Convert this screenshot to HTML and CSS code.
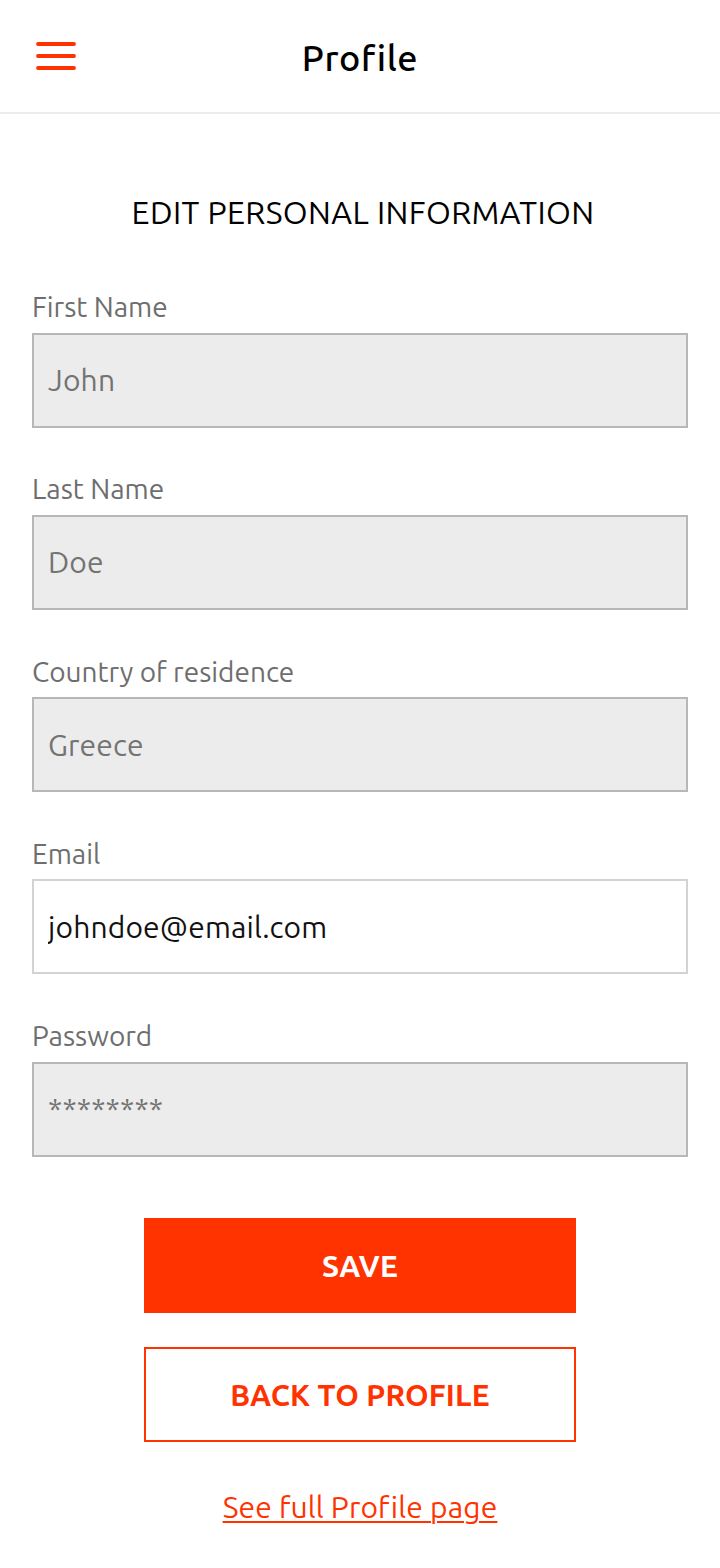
FILE: index.html
```html
<!DOCTYPE html>
<html lang="en">
<head>
<meta charset="utf-8">
<title>Profile</title>
<link rel="stylesheet" href="styles.css">
</head>
<body>
<header class="topbar">
  <div class="topbar-left">
    <button class="menu-btn" aria-label="Menu">
      <svg width="40" height="28" viewBox="0 0 40 28" aria-hidden="true">
        <line x1="2" y1="2" x2="38" y2="2" />
        <line x1="2" y1="14" x2="38" y2="14" />
        <line x1="2" y1="26" x2="38" y2="26" />
      </svg>
    </button>
  </div>
  <h1 class="topbar-title">Profile</h1>
  <div class="topbar-right"></div>
</header>

<main class="content">
  <h2 class="section-title">EDIT PERSONAL INFORMATION</h2>

  <form class="form">
    <div class="field">
      <label class="field-label" for="fn">First Name</label>
      <input class="field-input" id="fn" type="text" value="John" disabled>
    </div>
    <div class="field">
      <label class="field-label" for="ln">Last Name</label>
      <input class="field-input" id="ln" type="text" value="Doe" disabled>
    </div>
    <div class="field">
      <label class="field-label" for="cr">Country of residence</label>
      <input class="field-input" id="cr" type="text" value="Greece" disabled>
    </div>
    <div class="field">
      <label class="field-label" for="em">Email</label>
      <input class="field-input field-input-active" id="em" type="email" value="johndoe@email.com">
    </div>
    <div class="field">
      <label class="field-label" for="pw">Password</label>
      <input class="field-input" id="pw" type="text" value="********" disabled>
    </div>

    <div class="actions">
      <button type="button" class="btn btn-primary">SAVE</button>
      <button type="button" class="btn btn-outline">BACK TO PROFILE</button>
      <a class="link" href="#">See full Profile page</a>
    </div>
  </form>
</main>
</body>
</html>
```

FILE: styles.css
```css
* {
  box-sizing: border-box;
}

html, body {
  margin: 0;
  padding: 0;
  background: #ffffff;
}

body {
  font-family: "Ubuntu", "Roboto", "Noto Sans", sans-serif;
  color: #000;
}

.topbar {
  height: 114px;
  border-bottom: 2px solid #ececec;
  display: grid;
  grid-template-columns: 1fr auto 1fr;
  align-items: center;
}

.topbar-left {
  padding-left: 36px;
  display: flex;
  align-items: center;
}

.menu-btn {
  border: 0;
  background: none;
  padding: 0;
  margin: 0;
  width: 40px;
  height: 28px;
  display: block;
}

.menu-btn svg {
  display: block;
}

.menu-btn line {
  stroke: #ff3300;
  stroke-width: 3.8;
  stroke-linecap: round;
}

.topbar-title {
  margin: 0;
  padding-top: 3px;
  font-size: 36px;
  font-weight: 500;
  line-height: 40px;
  letter-spacing: 0.6px;
}

.content {
  padding: 0 32px;
}

.section-title {
  margin: 79px 0 0;
  padding-left: 6px;
  font-size: 32px;
  line-height: 38px;
  font-weight: 400;
  letter-spacing: 0.4px;
  text-align: center;
}

.form {
  margin-top: 60px;
  display: flex;
  flex-direction: column;
}

.field {
  display: flex;
  flex-direction: column;
  margin-bottom: 45.75px;
}

.field-label {
  font-size: 28px;
  line-height: 32px;
  color: #6e6e6e;
  margin-bottom: 9.5px;
}

.field-input {
  width: 100%;
  height: 95px;
  margin: 0;
  padding: 0 14px;
  border: 2px solid #b7b7b7;
  background: #ececec;
  font-family: inherit;
  font-size: 30px;
  letter-spacing: 0.15px;
  color: #737373;
  border-radius: 0;
  outline: none;
  -webkit-text-fill-color: #737373;
  opacity: 1;
}

.field-input-active {
  background: #ffffff;
  border-color: #d3d3d3;
  color: #111111;
  -webkit-text-fill-color: #111111;
}

.actions {
  margin-top: 15.75px;
  display: flex;
  flex-direction: column;
  align-items: center;
}

.btn {
  width: 432px;
  height: 95px;
  margin: 0;
  font-family: inherit;
  font-size: 30px;
  font-weight: 700;
  letter-spacing: 0.2px;
  border-radius: 0;
  cursor: pointer;
}

.btn-primary {
  background: #ff3300;
  color: #ffffff;
  border: 0;
}

.btn-outline {
  margin-top: 34px;
  background: #ffffff;
  color: #ff3300;
  border: 2px solid #ff3300;
}

.link {
  margin-top: 48px;
  font-size: 30px;
  line-height: 34px;
  letter-spacing: 0.15px;
  color: #ff3300;
  text-decoration: underline;
  text-underline-offset: 3px;
  text-decoration-thickness: 2px;
}
```
